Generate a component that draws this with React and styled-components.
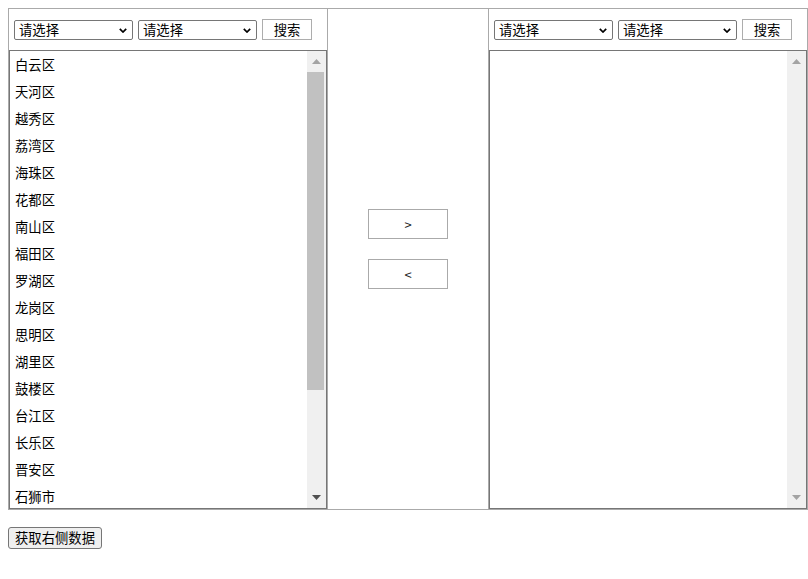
import React from 'react';
import styled, { createGlobalStyle } from 'styled-components';

const Global = createGlobalStyle`
  html { overflow: hidden; background: #fff; }
  body {
    margin: 8px 0 8px 8px;
    padding: 0;
    background: #fff;
    font-family: "Noto Sans CJK SC", "Microsoft YaHei", sans-serif;
    color: #000;
  }
  * { box-sizing: border-box; }
`;

const Transfer = styled.div`
  display: flex;
  width: 800px;
  height: 502px;
  border: 1px solid #aaa;
`;

const Panel = styled.div`
  width: 319px;
  display: flex;
  flex-direction: column;
  ${(p) => (p.$side === 'left' ? 'border-right: 1px solid #aaa;' : 'border-left: 1px solid #aaa;')}
`;

const Toolbar = styled.div`
  height: 41px;
  display: flex;
  align-items: center;
  gap: 5px;
  padding: 0 5px;
`;

const SelectWrap = styled.div`
  position: relative;
  width: 119px;
  height: 20px;
`;

const Select = styled.select`
  display: block;
  appearance: none;
  -webkit-appearance: none;
  width: 100%;
  height: 100%;
  border: 1px solid #767676;
  border-radius: 2px;
  background: #fff;
  padding: 0 0 0 4px;
  margin: 0;
  font-family: "Noto Sans CJK SC", sans-serif;
  font-size: 13.33px;
  line-height: 18px;
  color: #000;
  outline: none;
`;

const Chevron = styled.svg`
  position: absolute;
  right: 6px;
  top: 8px;
  pointer-events: none;
`;

const SearchButton = styled.button`
  width: 50px;
  height: 21px;
  padding: 0;
  margin: 0;
  border: 1px solid #adadad;
  background: #fff;
  font-family: "Noto Sans CJK SC", sans-serif;
  font-size: 13.33px;
  line-height: 19px;
  color: #000;
`;

const ListBox = styled.div`
  flex: 1;
  display: flex;
  border: 1px solid #767676;
  overflow: hidden;
  background: #fff;
`;

const Items = styled.ul`
  flex: 1;
  margin: 0;
  padding: 0;
  list-style: none;
  overflow: hidden;
`;

const Item = styled.li`
  height: 27px;
  line-height: 27px;
  padding-left: 5px;
  font-size: 13.33px;
  white-space: nowrap;
`;

const Scrollbar = styled.div`
  width: 19px;
  display: flex;
  flex-direction: column;
  background: #f0f0f0;
`;

const ArrowBox = styled.div`
  height: 21px;
  display: flex;
  align-items: center;
  justify-content: center;
`;

const Track = styled.div`
  flex: 1;
  display: flex;
  flex-direction: column;
`;

const Thumb = styled.div`
  width: 17px;
  height: 318px;
  background: #c1c1c1;
`;

const Middle = styled.div`
  width: 160px;
  display: flex;
  flex-direction: column;
  align-items: center;
  gap: 20px;
  padding-top: 200px;
`;

const MoveButton = styled.button`
  width: 80px;
  height: 30px;
  padding: 0;
  margin: 0;
  border: 1px solid #aaa;
  background: #fff;
  font-family: "Noto Sans CJK SC", sans-serif;
  font-size: 13px;
  color: #222;
`;

const ActionButton = styled.button`
  display: block;
  margin-top: 17px;
  height: 22px;
  padding: 0 6px;
  border: 1px solid #767676;
  border-radius: 3px;
  background: #efefef;
  font-family: "Noto Sans CJK SC", sans-serif;
  font-size: 13.33px;
  line-height: 20px;
  color: #000;
`;

const Triangle = ({ dir, color }) => (
  <svg width="9" height="5" viewBox="0 0 9 5">
    {dir === 'up' ? (
      <polygon points="0,5 4.5,0 9,5" fill={color} />
    ) : (
      <polygon points="0,0 9,0 4.5,5" fill={color} />
    )}
  </svg>
);

const Dropdown = () => (
  <SelectWrap>
    <Select defaultValue="">
      <option value="">请选择</option>
    </Select>
    <Chevron width="8" height="5" viewBox="0 0 8 5">
      <polyline points="0.8,0.8 4,4 7.2,0.8" fill="none" stroke="#000" strokeWidth="1.7" />
    </Chevron>
  </SelectWrap>
);

const leftItems = [
  '白云区', '天河区', '越秀区', '荔湾区', '海珠区', '花都区', '南山区', '福田区',
  '罗湖区', '龙岗区', '思明区', '湖里区', '鼓楼区', '台江区', '长乐区', '晋安区',
  '石狮市',
];

const TransferPanel = ({ side, items }) => (
  <Panel $side={side}>
    <Toolbar>
      <Dropdown />
      <Dropdown />
      <SearchButton>搜索</SearchButton>
    </Toolbar>
    <ListBox>
      <Items>
        {items.map((it) => (
          <Item key={it}>{it}</Item>
        ))}
      </Items>
      <Scrollbar>
        <ArrowBox>
          <Triangle dir="up" color="#a3a3a3" />
        </ArrowBox>
        <Track>{items.length > 0 && <Thumb />}</Track>
        <ArrowBox>
          <Triangle dir="down" color={items.length > 0 ? '#505050' : '#a3a3a3'} />
        </ArrowBox>
      </Scrollbar>
    </ListBox>
  </Panel>
);

export default function App() {
  return (
    <>
      <Global />
      <Transfer>
        <TransferPanel side="left" items={leftItems} />
        <Middle>
          <MoveButton>&gt;</MoveButton>
          <MoveButton>&lt;</MoveButton>
        </Middle>
        <TransferPanel side="right" items={[]} />
      </Transfer>
      <ActionButton>获取右侧数据</ActionButton>
    </>
  );
}
